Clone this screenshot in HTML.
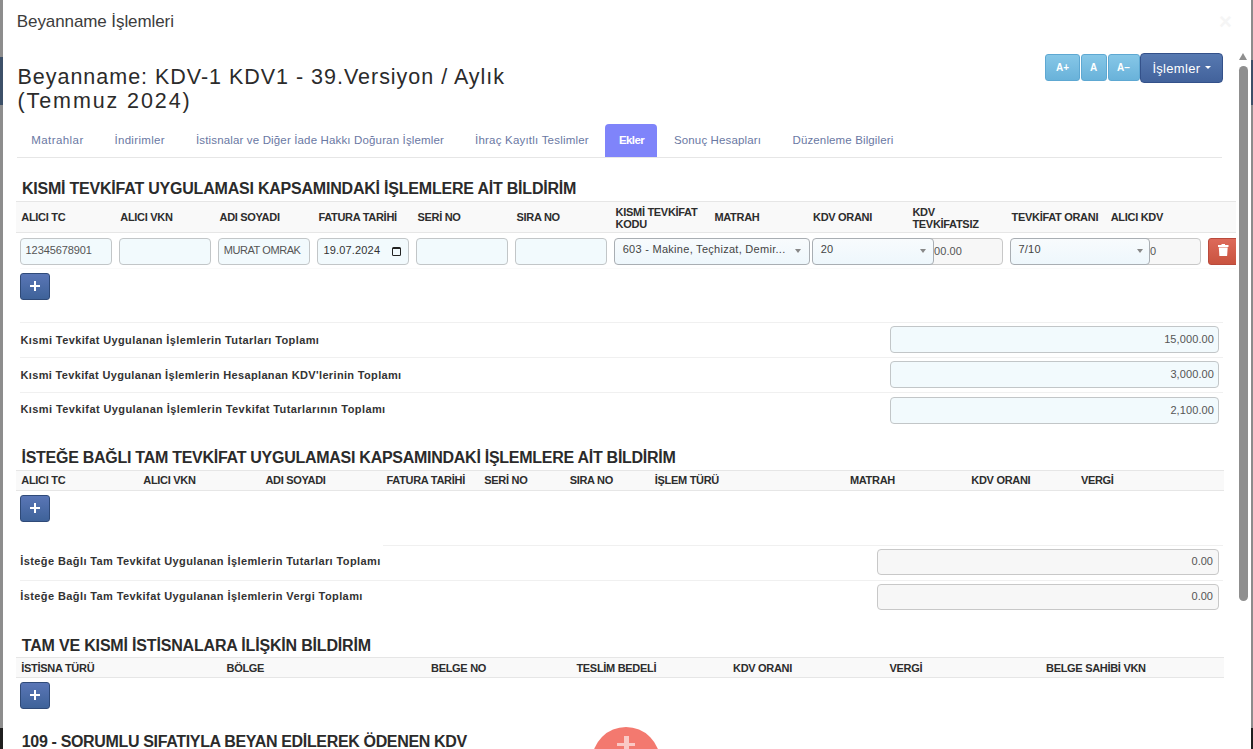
<!DOCTYPE html>
<html><head><meta charset="utf-8"><style>
html,body{margin:0;padding:0;}
body{width:1253px;height:749px;overflow:hidden;position:relative;background:#fff;font-family:"Liberation Sans", sans-serif;}
.t{position:absolute;white-space:nowrap;line-height:1;font-family:"Liberation Sans", sans-serif;}
</style></head><body>
<div style="position:absolute;left:0px;top:0px;width:3px;height:749px;background:#8d8d8d"></div>
<div style="position:absolute;left:0px;top:57px;width:3px;height:48px;background:#3d5068"></div>
<div style="position:absolute;left:0px;top:728px;width:3px;height:21px;background:#1f1f1f"></div>
<div style="position:absolute;left:1251px;top:0px;width:2px;height:749px;background:#8c8c8c"></div>
<div style="position:absolute;left:1251px;top:60px;width:2px;height:45px;background:#3d5068"></div>
<div style="position:absolute;left:1251px;top:728px;width:2px;height:21px;background:#1f1f1f"></div>
<div class="t" style="left:16.8px;top:13.01px;font-size:17px;font-weight:400;color:#3c3c3c;letter-spacing:-0.09px;">Beyanname İşlemleri</div>
<div class="t" style="left:1219.0px;top:10.98px;font-size:22px;font-weight:700;color:#f5f5f5;letter-spacing:0px;">×</div>
<div class="t" style="left:17.5px;top:67.10px;font-size:21.5px;font-weight:400;color:#2b2b2b;letter-spacing:0.98px;">Beyanname: KDV-1 KDV1 - 39.Versiyon / Aylık</div>
<div class="t" style="left:17.5px;top:91.20px;font-size:21.5px;font-weight:400;color:#2b2b2b;letter-spacing:1.9px;">(Temmuz 2024)</div>
<div style="position:absolute;left:1045px;top:54px;width:35px;height:27px;background:linear-gradient(#86c7e7,#69b2da);border:1px solid #5ea8d2;border-radius:3px;box-sizing:border-box;"></div>
<div style="position:absolute;left:1081px;top:54px;width:26px;height:27px;background:linear-gradient(#86c7e7,#69b2da);border:1px solid #5ea8d2;border-radius:3px;box-sizing:border-box;"></div>
<div style="position:absolute;left:1108px;top:54px;width:32px;height:27px;background:linear-gradient(#86c7e7,#69b2da);border:1px solid #5ea8d2;border-radius:3px;box-sizing:border-box;"></div>
<div style="position:absolute;left:1140px;top:53px;width:83px;height:30px;background:linear-gradient(#5779b1,#42629b);border:1px solid #34518a;border-radius:4px;box-sizing:border-box;"></div>
<div class="t" style="left:1056.0px;top:63.13px;font-size:10px;font-weight:700;color:#fff;letter-spacing:0px;">A+</div>
<div class="t" style="left:1090.0px;top:63.13px;font-size:10px;font-weight:700;color:#fff;letter-spacing:0px;">A</div>
<div class="t" style="left:1117.0px;top:63.13px;font-size:10px;font-weight:700;color:#fff;letter-spacing:0px;">A–</div>
<div class="t" style="left:1152.4px;top:62.10px;font-size:13px;font-weight:400;color:#fff;letter-spacing:0.31px;">İşlemler</div>
<div style="position:absolute;left:1205px;top:66px;width:0;height:0;border-left:3px solid transparent;border-right:3px solid transparent;border-top:3.5px solid #fff"></div>
<div class="t" style="left:31.3px;top:134.77px;font-size:11.5px;font-weight:400;color:#6a78a3;letter-spacing:0.42px;">Matrahlar</div>
<div class="t" style="left:114.4px;top:134.77px;font-size:11.5px;font-weight:400;color:#6a78a3;letter-spacing:0.33px;">İndirimler</div>
<div class="t" style="left:196.0px;top:134.77px;font-size:11.5px;font-weight:400;color:#6a78a3;letter-spacing:0.15px;">İstisnalar ve Diğer İade Hakkı Doğuran İşlemler</div>
<div class="t" style="left:475.0px;top:134.77px;font-size:11.5px;font-weight:400;color:#6a78a3;letter-spacing:0.21px;">İhraç Kayıtlı Teslimler</div>
<div style="position:absolute;left:605px;top:124px;width:52px;height:33px;background:#7f84fa;border-radius:4px 4px 0 0"></div>
<div class="t" style="left:619.0px;top:134.77px;font-size:11.5px;font-weight:700;color:#fff;letter-spacing:-0.6px;">Ekler</div>
<div class="t" style="left:674.0px;top:134.77px;font-size:11.5px;font-weight:400;color:#6a78a3;letter-spacing:0.13px;">Sonuç Hesapları</div>
<div class="t" style="left:792.5px;top:134.77px;font-size:11.5px;font-weight:400;color:#6a78a3;letter-spacing:0.13px;">Düzenleme Bilgileri</div>
<div style="position:absolute;left:17px;top:157px;width:1205px;height:1px;background:#e6e6e6"></div>
<div class="t" style="left:21.9px;top:180.86px;font-size:16px;font-weight:700;color:#2b2b2b;letter-spacing:-0.21px;">KISMİ TEVKİFAT UYGULAMASI KAPSAMINDAKİ İŞLEMLERE AİT BİLDİRİM</div>
<div style="position:absolute;left:16px;top:201px;width:1220px;height:32px;background:#f9f9f9;border-top:1px solid #e6e6e6;border-bottom:1px solid #e6e6e6;box-sizing:border-box"></div>
<div class="t" style="left:21.3px;top:212.19px;font-size:11px;font-weight:700;color:#2d2d2d;letter-spacing:-0.3px;">ALICI TC</div>
<div class="t" style="left:120.3px;top:212.19px;font-size:11px;font-weight:700;color:#2d2d2d;letter-spacing:-0.3px;">ALICI VKN</div>
<div class="t" style="left:219.5px;top:212.19px;font-size:11px;font-weight:700;color:#2d2d2d;letter-spacing:-0.3px;">ADI SOYADI</div>
<div class="t" style="left:318.4px;top:212.19px;font-size:11px;font-weight:700;color:#2d2d2d;letter-spacing:-0.3px;">FATURA TARİHİ</div>
<div class="t" style="left:417.5px;top:212.19px;font-size:11px;font-weight:700;color:#2d2d2d;letter-spacing:-0.3px;">SERİ NO</div>
<div class="t" style="left:516.5px;top:212.19px;font-size:11px;font-weight:700;color:#2d2d2d;letter-spacing:-0.3px;">SIRA NO</div>
<div class="t" style="left:714.4px;top:212.19px;font-size:11px;font-weight:700;color:#2d2d2d;letter-spacing:-0.3px;">MATRAH</div>
<div class="t" style="left:813.0px;top:212.19px;font-size:11px;font-weight:700;color:#2d2d2d;letter-spacing:-0.3px;">KDV ORANI</div>
<div class="t" style="left:1011.5px;top:212.19px;font-size:11px;font-weight:700;color:#2d2d2d;letter-spacing:-0.3px;">TEVKİFAT ORANI</div>
<div class="t" style="left:1110.7px;top:212.19px;font-size:11px;font-weight:700;color:#2d2d2d;letter-spacing:-0.3px;">ALICI KDV</div>
<div class="t" style="left:615.6px;top:206.59px;font-size:11px;font-weight:700;color:#2d2d2d;letter-spacing:-0.3px;">KISMİ TEVKİFAT</div>
<div class="t" style="left:615.6px;top:218.59px;font-size:11px;font-weight:700;color:#2d2d2d;letter-spacing:-0.3px;">KODU</div>
<div class="t" style="left:912.4px;top:206.59px;font-size:11px;font-weight:700;color:#2d2d2d;letter-spacing:-0.3px;">KDV</div>
<div class="t" style="left:912.4px;top:218.59px;font-size:11px;font-weight:700;color:#2d2d2d;letter-spacing:-0.3px;">TEVKİFATSIZ</div>
<div style="position:absolute;left:20px;top:238px;width:92px;height:27px;background:#f2fafd;border:1px solid #c2c6c8;border-radius:4px;box-sizing:border-box;"></div>
<div style="position:absolute;left:119px;top:238px;width:92px;height:27px;background:#f2fafd;border:1px solid #c2c6c8;border-radius:4px;box-sizing:border-box;"></div>
<div style="position:absolute;left:218px;top:238px;width:92px;height:27px;background:#f2fafd;border:1px solid #c2c6c8;border-radius:4px;box-sizing:border-box;"></div>
<div style="position:absolute;left:317px;top:238px;width:92px;height:27px;background:#f2fafd;border:1px solid #c2c6c8;border-radius:4px;box-sizing:border-box;"></div>
<div style="position:absolute;left:416px;top:238px;width:92px;height:27px;background:#f2fafd;border:1px solid #c2c6c8;border-radius:4px;box-sizing:border-box;"></div>
<div style="position:absolute;left:515px;top:238px;width:92px;height:27px;background:#f2fafd;border:1px solid #c2c6c8;border-radius:4px;box-sizing:border-box;"></div>
<div class="t" style="left:25.6px;top:245.49px;font-size:11px;font-weight:400;color:#555;letter-spacing:-0.1px;">12345678901</div>
<div class="t" style="left:223.8px;top:245.49px;font-size:11px;font-weight:400;color:#555;letter-spacing:-0.44px;">MURAT OMRAK</div>
<div class="t" style="left:323.5px;top:245.49px;font-size:11px;font-weight:400;color:#333;letter-spacing:0.16px;">19.07.2024</div>
<div style="position:absolute;left:392px;top:247px;width:9px;height:9px;box-sizing:border-box;border:1.5px solid #222;border-top-width:2.5px;border-radius:1.5px"></div>
<div style="position:absolute;left:900px;top:238px;width:103px;height:27px;background:#f7f7f7;border:1px solid #c8c8c8;border-radius:4px;box-sizing:border-box;"></div>
<div style="position:absolute;left:1100px;top:238px;width:101px;height:27px;background:#f7f7f7;border:1px solid #c8c8c8;border-radius:4px;box-sizing:border-box;"></div>
<div class="t" style="left:934.0px;top:245.79px;font-size:11px;font-weight:400;color:#555;letter-spacing:0.1px;clip-path:inset(0 0 0 0)">00.00</div>
<div class="t" style="left:1150.0px;top:245.79px;font-size:11px;font-weight:400;color:#555;letter-spacing:0px;">0</div>
<div style="position:absolute;left:614px;top:238px;width:196px;height:27px;background:linear-gradient(#f8fbfd,#eef7fc);border:1px solid #a9aeb3;border-radius:4px;box-sizing:border-box;"></div>
<div style="position:absolute;left:812px;top:238px;width:122px;height:27px;background:linear-gradient(#f8fbfd,#eef7fc);border:1px solid #a9aeb3;border-radius:4px;box-sizing:border-box;"></div>
<div style="position:absolute;left:1010px;top:238px;width:140px;height:27px;background:linear-gradient(#f8fbfd,#eef7fc);border:1px solid #a9aeb3;border-radius:4px;box-sizing:border-box;"></div>
<div class="t" style="left:622.7px;top:243.79px;font-size:11px;font-weight:400;color:#444;letter-spacing:0.28px;">603 - Makine, Teçhizat, Demir...</div>
<div class="t" style="left:820.7px;top:243.59px;font-size:11px;font-weight:400;color:#444;letter-spacing:0.2px;">20</div>
<div class="t" style="left:1018.5px;top:243.79px;font-size:11px;font-weight:400;color:#444;letter-spacing:0.2px;">7/10</div>
<div style="position:absolute;left:795px;top:249px;width:0;height:0;border-left:3.5px solid transparent;border-right:3.5px solid transparent;border-top:4px solid #888"></div>
<div style="position:absolute;left:920px;top:249px;width:0;height:0;border-left:3.5px solid transparent;border-right:3.5px solid transparent;border-top:4px solid #888"></div>
<div style="position:absolute;left:1137px;top:249px;width:0;height:0;border-left:3.5px solid transparent;border-right:3.5px solid transparent;border-top:4px solid #888"></div>
<div style="position:absolute;left:1208px;top:238px;width:40px;height:27px;background:linear-gradient(#dd6a5a,#c9533f);border:1px solid #b94a3c;border-radius:3px;box-sizing:border-box"></div>
<svg style="position:absolute;left:1218px;top:244px" width="10.5" height="12" viewBox="0 0 10.5 12"><rect x="0" y="1" width="10.5" height="2" fill="#fff"/><rect x="3.5" y="0" width="3.5" height="1.5" fill="#fff"/><path d="M0.8 3.6 H9.7 L9.1 12 H1.4 Z" fill="#fff"/></svg>
<div style="position:absolute;left:1236px;top:195px;width:15px;height:80px;background:#fff"></div>
<div style="position:absolute;left:20px;top:268px;width:1216px;height:1px;background:#fafafa"></div>
<div style="position:absolute;left:20px;top:273px;width:30px;height:27px;background:linear-gradient(#5a76b6,#3e6299);border:1px solid #2f4a78;border-radius:3px;box-sizing:border-box"></div>
<div style="position:absolute;left:30px;top:285px;width:10px;height:2.4px;background:#fff"></div>
<div style="position:absolute;left:33.8px;top:281px;width:2.4px;height:10px;background:#fff"></div>
<div style="position:absolute;left:20px;top:322px;width:1203px;height:1px;background:#f0f0f0"></div>
<div style="position:absolute;left:20px;top:357px;width:1203px;height:1px;background:#f0f0f0"></div>
<div style="position:absolute;left:20px;top:392px;width:1203px;height:1px;background:#f0f0f0"></div>
<div class="t" style="left:20.5px;top:334.69px;font-size:11px;font-weight:700;color:#333;letter-spacing:0.39px;">Kısmi Tevkifat Uygulanan İşlemlerin Tutarları Toplamı</div>
<div class="t" style="left:20.5px;top:369.59px;font-size:11px;font-weight:700;color:#333;letter-spacing:0.34px;">Kısmi Tevkifat Uygulanan İşlemlerin Hesaplanan KDV'lerinin Toplamı</div>
<div class="t" style="left:20.5px;top:404.49px;font-size:11px;font-weight:700;color:#333;letter-spacing:0.41px;">Kısmi Tevkifat Uygulanan İşlemlerin Tevkifat Tutarlarının Toplamı</div>
<div style="position:absolute;left:890px;top:326px;width:329px;height:27px;background:#f2fafd;border:1px solid #c2c6c8;border-radius:4px;box-sizing:border-box;"></div>
<div class="t" style="right:39px;top:333.79px;font-size:11px;color:#555;letter-spacing:0.1px">15,000.00</div>
<div style="position:absolute;left:890px;top:361px;width:329px;height:27px;background:#f2fafd;border:1px solid #c2c6c8;border-radius:4px;box-sizing:border-box;"></div>
<div class="t" style="right:39px;top:368.79px;font-size:11px;color:#555;letter-spacing:0.1px">3,000.00</div>
<div style="position:absolute;left:890px;top:397px;width:329px;height:27px;background:#f2fafd;border:1px solid #c2c6c8;border-radius:4px;box-sizing:border-box;"></div>
<div class="t" style="right:39px;top:404.79px;font-size:11px;color:#555;letter-spacing:0.1px">2,100.00</div>
<div class="t" style="left:21.5px;top:450.06px;font-size:16px;font-weight:700;color:#2b2b2b;letter-spacing:-0.27px;">İSTEĞE BAĞLI TAM TEVKİFAT UYGULAMASI KAPSAMINDAKİ İŞLEMLERE AİT BİLDİRİM</div>
<div style="position:absolute;left:16px;top:470px;width:1208px;height:21px;background:#f9f9f9;border-top:1px solid #e6e6e6;border-bottom:1px solid #e6e6e6;box-sizing:border-box"></div>
<div class="t" style="left:21.3px;top:475.49px;font-size:11px;font-weight:700;color:#2d2d2d;letter-spacing:-0.3px;">ALICI TC</div>
<div class="t" style="left:143.3px;top:475.49px;font-size:11px;font-weight:700;color:#2d2d2d;letter-spacing:-0.3px;">ALICI VKN</div>
<div class="t" style="left:265.4px;top:475.49px;font-size:11px;font-weight:700;color:#2d2d2d;letter-spacing:-0.3px;">ADI SOYADI</div>
<div class="t" style="left:386.5px;top:475.49px;font-size:11px;font-weight:700;color:#2d2d2d;letter-spacing:-0.3px;">FATURA TARİHİ</div>
<div class="t" style="left:484.3px;top:475.49px;font-size:11px;font-weight:700;color:#2d2d2d;letter-spacing:-0.3px;">SERİ NO</div>
<div class="t" style="left:569.7px;top:475.49px;font-size:11px;font-weight:700;color:#2d2d2d;letter-spacing:-0.3px;">SIRA NO</div>
<div class="t" style="left:654.8px;top:475.49px;font-size:11px;font-weight:700;color:#2d2d2d;letter-spacing:-0.3px;">İŞLEM TÜRÜ</div>
<div class="t" style="left:849.9px;top:475.49px;font-size:11px;font-weight:700;color:#2d2d2d;letter-spacing:-0.3px;">MATRAH</div>
<div class="t" style="left:971.3px;top:475.49px;font-size:11px;font-weight:700;color:#2d2d2d;letter-spacing:-0.3px;">KDV ORANI</div>
<div class="t" style="left:1080.9px;top:475.49px;font-size:11px;font-weight:700;color:#2d2d2d;letter-spacing:-0.3px;">VERGİ</div>
<div style="position:absolute;left:20px;top:495px;width:30px;height:27px;background:linear-gradient(#5a76b6,#3e6299);border:1px solid #2f4a78;border-radius:3px;box-sizing:border-box"></div>
<div style="position:absolute;left:30px;top:507px;width:10px;height:2.4px;background:#fff"></div>
<div style="position:absolute;left:33.8px;top:503px;width:2.4px;height:10px;background:#fff"></div>
<div style="position:absolute;left:383px;top:545px;width:840px;height:1px;background:#f0f0f0"></div>
<div style="position:absolute;left:20px;top:580px;width:1203px;height:1px;background:#f0f0f0"></div>
<div class="t" style="left:20.3px;top:556.19px;font-size:11px;font-weight:700;color:#333;letter-spacing:0.4px;">İsteğe Bağlı Tam Tevkifat Uygulanan İşlemlerin Tutarları Toplamı</div>
<div class="t" style="left:20.3px;top:591.29px;font-size:11px;font-weight:700;color:#333;letter-spacing:0.4px;">İsteğe Bağlı Tam Tevkifat Uygulanan İşlemlerin Vergi Toplamı</div>
<div style="position:absolute;left:876.5px;top:548.5px;width:342.5px;height:26px;background:#f7f7f7;border:1px solid #c8c8c8;border-radius:4px;box-sizing:border-box;"></div>
<div class="t" style="right:40px;top:556.39px;font-size:11px;color:#555">0.00</div>
<div style="position:absolute;left:876.5px;top:583.5px;width:342.5px;height:26px;background:#f7f7f7;border:1px solid #c8c8c8;border-radius:4px;box-sizing:border-box;"></div>
<div class="t" style="right:40px;top:591.39px;font-size:11px;color:#555">0.00</div>
<div class="t" style="left:21.8px;top:637.76px;font-size:16px;font-weight:700;color:#2b2b2b;letter-spacing:-0.18px;">TAM VE KISMİ İSTİSNALARA İLİŞKİN BİLDİRİM</div>
<div style="position:absolute;left:16px;top:657px;width:1208px;height:21px;background:#f9f9f9;border-top:1px solid #e6e6e6;border-bottom:1px solid #e6e6e6;box-sizing:border-box"></div>
<div class="t" style="left:21.3px;top:662.69px;font-size:11px;font-weight:700;color:#2d2d2d;letter-spacing:-0.3px;">İSTİSNA TÜRÜ</div>
<div class="t" style="left:226.5px;top:662.69px;font-size:11px;font-weight:700;color:#2d2d2d;letter-spacing:-0.3px;">BÖLGE</div>
<div class="t" style="left:431.0px;top:662.69px;font-size:11px;font-weight:700;color:#2d2d2d;letter-spacing:-0.3px;">BELGE NO</div>
<div class="t" style="left:576.4px;top:662.69px;font-size:11px;font-weight:700;color:#2d2d2d;letter-spacing:-0.3px;">TESLİM BEDELİ</div>
<div class="t" style="left:733.0px;top:662.69px;font-size:11px;font-weight:700;color:#2d2d2d;letter-spacing:-0.3px;">KDV ORANI</div>
<div class="t" style="left:889.5px;top:662.69px;font-size:11px;font-weight:700;color:#2d2d2d;letter-spacing:-0.3px;">VERGİ</div>
<div class="t" style="left:1046.0px;top:662.69px;font-size:11px;font-weight:700;color:#2d2d2d;letter-spacing:-0.3px;">BELGE SAHİBİ VKN</div>
<div style="position:absolute;left:20px;top:682px;width:30px;height:27px;background:linear-gradient(#5a76b6,#3e6299);border:1px solid #2f4a78;border-radius:3px;box-sizing:border-box"></div>
<div style="position:absolute;left:30px;top:694px;width:10px;height:2.4px;background:#fff"></div>
<div style="position:absolute;left:33.8px;top:690px;width:2.4px;height:10px;background:#fff"></div>
<div class="t" style="left:21.8px;top:733.86px;font-size:16px;font-weight:700;color:#2b2b2b;letter-spacing:-0.34px;">109 - SORUMLU SIFATIYLA BEYAN EDİLEREK ÖDENEN KDV</div>
<div style="position:absolute;left:592px;top:727px;width:68px;height:68px;background:#f3796f;border-radius:50%"></div>
<div style="position:absolute;left:617px;top:742.5px;width:18px;height:3.5px;background:rgba(255,255,255,0.6)"></div>
<div style="position:absolute;left:623.5px;top:736px;width:5px;height:6.5px;background:rgba(255,255,255,0.6)"></div>
<div style="position:absolute;left:623.5px;top:746px;width:5px;height:6px;background:rgba(255,255,255,0.6)"></div>
<div style="position:absolute;left:1239px;top:53px;width:0;height:0;border-left:4.5px solid transparent;border-right:4.5px solid transparent;border-bottom:7px solid #8f8f8f"></div>
<div style="position:absolute;left:1239px;top:66px;width:9px;height:535px;background:#8f8f8f;border-radius:4.5px"></div>
</body></html>
